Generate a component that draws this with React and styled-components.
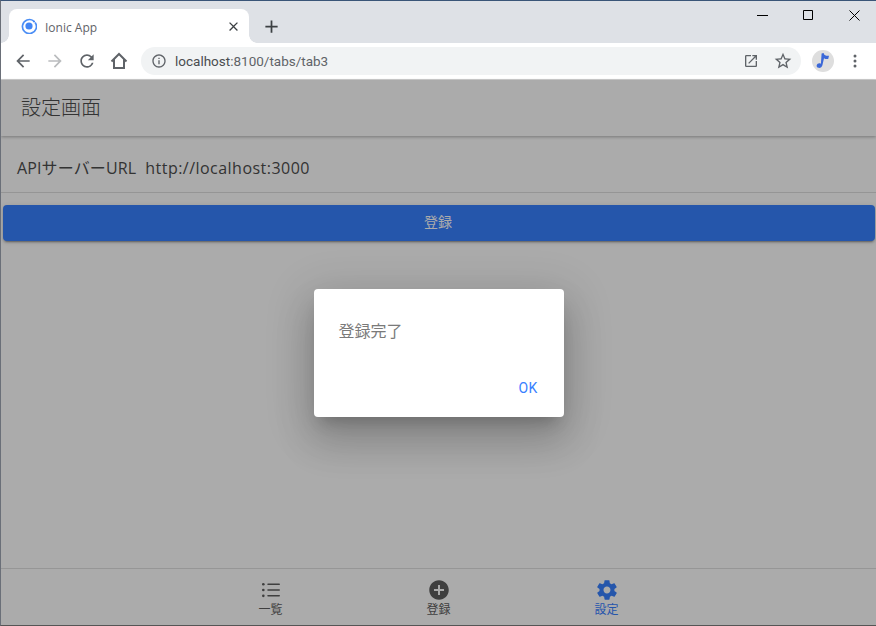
import styled, { createGlobalStyle } from 'styled-components';
import { IoMdAddCircle, IoMdSettings, IoIosList } from 'react-icons/io';
import {
  MdArrowBack,
  MdArrowForward,
  MdRefresh,
  MdInfoOutline,
  MdOpenInNew,
  MdStarBorder,
  MdClose,
  MdAdd,
} from 'react-icons/md';

const GlobalStyle = createGlobalStyle`
  html, body {
    margin: 0;
    padding: 0;
    background: #fff;
  }
  * {
    box-sizing: border-box;
  }
`;

const HomeIcon = () => (
  <svg width="18" height="18" viewBox="0 0 18 18" fill="none" stroke="#5f6368" strokeWidth="2">
    <path d="M1.5 9.5 9 2l7.5 7.5M4 7.5V16h10V7.5" strokeLinejoin="miter" />
  </svg>
);

const IonicLogo = () => (
  <svg width="16" height="16" viewBox="0 0 16 16">
    <circle cx="8" cy="8" r="3.6" fill="#4285f4" />
    <path d="M12.6 2.9A7 7 0 1 0 14.1 4.4" fill="none" stroke="#4b8ef5" strokeWidth="1.7" />
    <circle cx="13" cy="3.5" r="1.1" fill="#4285f4" />
  </svg>
);

const NoteIcon = () => (
  <svg width="16" height="18" viewBox="0 0 16 18">
    <path d="M6.6 1.5 8.6 1c.6 2.6 2.6 3 5.4 2.8l-.8 3.2c-1.6.3-3.2 0-4.2-.8l-1.6 7c-.4 1.8-2.2 3-3.9 2.6-1.4-.3-2.1-1.4-1.8-2.6.3-1.3 1.8-2.2 3.2-1.9.4.1.7.2 1 .4z" fill="#3b68d8" />
  </svg>
);

const DotsIcon = () => (
  <svg width="4" height="14" viewBox="0 0 4 14" fill="#5f6368">
    <circle cx="2" cy="2" r="1.5" />
    <circle cx="2" cy="7" r="1.5" />
    <circle cx="2" cy="12" r="1.5" />
  </svg>
);

const App = () => {
  return (
    <Page>
      <GlobalStyle />
      <TabStrip>
        <BrowserTab>
          <IonicLogo />
          <TabTitle>Ionic App</TabTitle>
          <TabClose>
            <MdClose />
          </TabClose>
        </BrowserTab>
        <NewTab>
          <MdAdd />
        </NewTab>
        <WindowControls>
          <WindowButton>
            <svg width="11" height="11" viewBox="0 0 11 11">
              <path d="M0 5.5h11" stroke="#000" />
            </svg>
          </WindowButton>
          <WindowButton>
            <svg width="11" height="11" viewBox="0 0 11 11">
              <path d="M.5.5h9v9h-9z" stroke="#000" fill="none" />
            </svg>
          </WindowButton>
          <WindowButton>
            <svg width="11" height="11" viewBox="0 0 11 11">
              <path d="M.5.5l10 10M10.5.5l-10 10" stroke="#000" fill="none" />
            </svg>
          </WindowButton>
        </WindowControls>
      </TabStrip>
      <Toolbar>
        <NavButton>
          <MdArrowBack />
        </NavButton>
        <NavButton $disabled>
          <MdArrowForward />
        </NavButton>
        <NavButton>
          <MdRefresh />
        </NavButton>
        <NavButton>
          <HomeIcon />
        </NavButton>
        <AddressBar>
          <InfoIcon>
            <MdInfoOutline />
          </InfoIcon>
          <Url>
            localhost<UrlRest>:8100/tabs/tab3</UrlRest>
          </Url>
          <AddressAction $size={16}>
            <MdOpenInNew />
          </AddressAction>
          <AddressAction $size={20}>
            <MdStarBorder />
          </AddressAction>
        </AddressBar>
        <Avatar>
          <NoteIcon />
        </Avatar>
        <MenuButton>
          <DotsIcon />
        </MenuButton>
      </Toolbar>

      <AppArea>
        <Header>
          <Title>設定画面</Title>
        </Header>
        <Content>
          <FormRow>
            <Label>APIサーバーURL</Label>
            <Value>http://localhost:3000</Value>
          </FormRow>
          <SubmitButton>登録</SubmitButton>
        </Content>
        <TabBar>
          <TabButton>
            <IoIosList />
            <TabLabel>一覧</TabLabel>
          </TabButton>
          <TabButton>
            <IoMdAddCircle />
            <TabLabel>登録</TabLabel>
          </TabButton>
          <TabButton $active>
            <IoMdSettings />
            <TabLabel>設定</TabLabel>
          </TabButton>
        </TabBar>
        <Backdrop>
          <Dialog>
            <Message>登録完了</Message>
            <DialogActions>
              <OkButton>OK</OkButton>
            </DialogActions>
          </Dialog>
        </Backdrop>
      </AppArea>
    </Page>
  );
};

const Page = styled.div`
  display: flex;
  flex-direction: column;
  width: 876px;
  height: 626px;
  overflow: hidden;
  border-top: 1px solid #3a5578;
  border-left: 1px solid #6a6f78;
  border-bottom: 1px solid #555;
  font-family: Roboto, 'Noto Sans CJK JP', sans-serif;
`;
const TabStrip = styled.div`
  display: flex;
  align-items: flex-end;
  flex: none;
  height: 42px;
  padding-left: 8px;
  background: #dee1e6;
`;
const BrowserTab = styled.div`
  position: relative;
  display: flex;
  align-items: center;
  width: 240px;
  height: 34px;
  padding: 0 8px 0 12px;
  border-radius: 8px 8px 0 0;
  background: #fff;
  &::before,
  &::after {
    content: '';
    position: absolute;
    bottom: 0;
    width: 8px;
    height: 8px;
  }
  &::before {
    left: -8px;
    background: radial-gradient(circle at 0 0, transparent 7.5px, #fff 8px);
  }
  &::after {
    right: -8px;
    background: radial-gradient(circle at 100% 0, transparent 7.5px, #fff 8px);
  }
`;
const TabTitle = styled.span`
  flex: 1;
  margin: 2px 0 0 8px;
  font-family: 'Open Sans', sans-serif;
  font-size: 12px;
  color: #5f6368;
`;
const TabClose = styled.span`
  display: flex;
  color: #3c4043;
  font-size: 15px;
`;
const NewTab = styled.span`
  display: flex;
  align-self: center;
  margin: 8px 0 0 12px;
  color: #3c4043;
  font-size: 21px;
`;
const WindowControls = styled.div`
  display: flex;
  align-self: flex-start;
  margin-left: auto;
  margin-right: -1px;
`;
const WindowButton = styled.span`
  display: flex;
  align-items: center;
  justify-content: center;
  width: 46px;
  height: 29px;
`;
const Toolbar = styled.div`
  display: flex;
  align-items: center;
  flex: none;
  height: 36px;
  padding-left: 6px;
  background: #fff;
`;
const NavButton = styled.span`
  display: flex;
  align-items: center;
  justify-content: center;
  width: 32px;
  height: 28px;
  color: ${(p) => (p.$disabled ? '#babcbe' : '#5f6368')};
  font-size: 20px;
`;
const AddressBar = styled.div`
  display: flex;
  align-items: center;
  width: 660px;
  height: 28px;
  margin-left: 6px;
  padding: 0 2px 0 10px;
  border-radius: 14px;
  background: #f1f3f4;
`;
const InfoIcon = styled.span`
  display: flex;
  color: #5f6368;
  font-size: 16px;
`;
const Url = styled.span`
  flex: 1;
  margin-left: 8px;
  font-size: 13.5px;
  color: #4a4d50;
`;
const UrlRest = styled.span`
  color: #5f6368;
`;
const AddressAction = styled.span`
  display: flex;
  justify-content: center;
  width: 32px;
  color: #5f6368;
  font-size: ${(p) => p.$size}px;
`;
const Avatar = styled.span`
  display: flex;
  align-items: center;
  justify-content: center;
  width: 22px;
  height: 22px;
  margin-left: 11px;
  border-radius: 50%;
  background: #dedede;
`;
const MenuButton = styled.span`
  display: flex;
  margin-left: 19px;
`;
const AppArea = styled.div`
  position: relative;
  display: flex;
  flex-direction: column;
  flex: 1;
  min-height: 0;
  border-top: 1px solid #d0d0d0;
  background: #fff;
`;
const Header = styled.header`
  display: flex;
  align-items: center;
  flex: none;
  height: 56px;
  padding: 0 0 4px 20px;
  box-shadow: 0 1px 3px rgba(0, 0, 0, 0.3);
`;
const Title = styled.h1`
  margin: 0;
  font-size: 20px;
  font-weight: 300;
  color: #4d4d4d;
`;
const Content = styled.main`
  flex: 1;
  padding-top: 1px;
`;
const FormRow = styled.div`
  display: flex;
  align-items: baseline;
  height: 56px;
  padding: 18px 0 0 16px;
  border-bottom: 1px solid #dedede;
  font-family: 'Open Sans', 'Noto Sans CJK JP', sans-serif;
  font-size: 16px;
  color: #4d4d4d;
`;
const Label = styled.span`
  margin-right: 9px;
  letter-spacing: 0.13px;
`;
const Value = styled.span`
  letter-spacing: 0.47px;
`;
const SubmitButton = styled.div`
  display: flex;
  align-items: center;
  justify-content: center;
  height: 36px;
  margin: 12px 1px 0 2px;
  padding: 0 2px 5px 0;
  border-radius: 4px;
  background: #3880ff;
  box-shadow: 0 3px 1px -2px rgba(0, 0, 0, 0.2), 0 2px 2px rgba(0, 0, 0, 0.14), 0 1px 5px rgba(0, 0, 0, 0.12);
  color: #fff;
  font-size: 14px;
`;
const TabBar = styled.nav`
  display: flex;
  justify-content: center;
  flex: none;
  height: 57px;
  border-top: 1px solid #e0e0e0;
  background: #fff;
`;
const TabButton = styled.div`
  display: flex;
  flex-direction: column;
  align-items: center;
  width: 168px;
  padding-top: 9px;
  color: ${(p) => (p.$active ? '#3880ff' : '#5f5f5f')};
  svg {
    width: 24px;
    height: 24px;
  }
`;
const TabLabel = styled.span`
  margin-top: 1px;
  font-size: 12px;
  line-height: 14px;
`;
const Backdrop = styled.div`
  position: absolute;
  inset: 0;
  display: flex;
  align-items: center;
  justify-content: center;
  background: rgba(0, 0, 0, 0.33);
`;
const Dialog = styled.div`
  display: flex;
  flex-direction: column;
  justify-content: space-between;
  width: 250px;
  height: 128px;
  border-radius: 4px;
  background: #fff;
  box-shadow: 0 11px 15px -7px rgba(0, 0, 0, 0.2), 0 24px 38px 3px rgba(0, 0, 0, 0.14), 0 9px 46px 8px rgba(0, 0, 0, 0.12);
`;
const Message = styled.div`
  padding: 33px 25px 0;
  font-size: 16px;
  line-height: 20px;
  color: #7a7a7a;
`;
const DialogActions = styled.div`
  display: flex;
  justify-content: flex-end;
  padding: 0 26px 20px 0;
`;
const OkButton = styled.span`
  font-size: 14px;
  letter-spacing: 0.3px;
  line-height: 18px;
  color: #3880ff;
`;

export default App;
